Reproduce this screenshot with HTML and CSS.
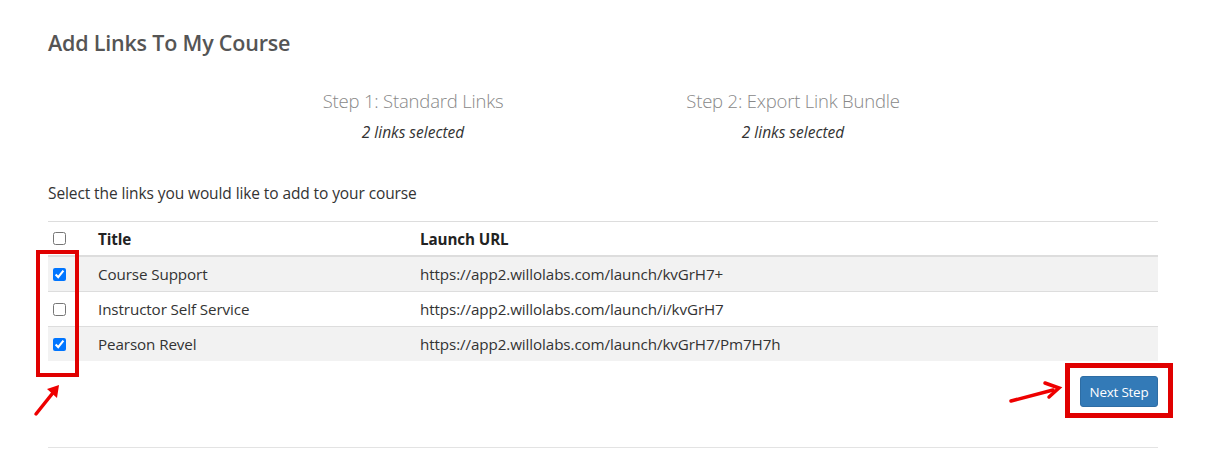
FILE: index.html
```html
<!DOCTYPE html>
<html>
<head>
<meta charset="utf-8">
<link rel="stylesheet" href="styles.css">
</head>
<body>
<div class="page">
  <h1 class="title">Add Links To My Course</h1>
  <div class="steps">
    <div class="step">
      <div class="step-name">Step 1: Standard Links</div>
      <div class="step-count">2 links selected</div>
    </div>
    <div class="step">
      <div class="step-name">Step 2: Export Link Bundle</div>
      <div class="step-count">2 links selected</div>
    </div>
  </div>
  <p class="intro">Select the links you would like to add to your course</p>
  <table class="links">
    <thead>
      <tr>
        <th class="c-check"><input type="checkbox"></th>
        <th class="c-title">Title</th>
        <th>Launch URL</th>
      </tr>
    </thead>
    <tbody>
      <tr class="odd">
        <td class="c-check"><input type="checkbox" checked></td>
        <td class="c-title">Course Support</td>
        <td>https://app2.willolabs.com/launch/kvGrH7+</td>
      </tr>
      <tr>
        <td class="c-check"><input type="checkbox"></td>
        <td class="c-title">Instructor Self Service</td>
        <td>https://app2.willolabs.com/launch/i/kvGrH7</td>
      </tr>
      <tr class="odd">
        <td class="c-check"><input type="checkbox" checked></td>
        <td class="c-title">Pearson Revel</td>
        <td>https://app2.willolabs.com/launch/kvGrH7/Pm7H7h</td>
      </tr>
    </tbody>
  </table>
  <div class="actions">
    <button class="btn">Next Step</button>
  </div>
  <hr class="rule">
</div>

<div class="mark mark-left"></div>
<div class="mark mark-right"></div>
<svg class="arrow arrow-left" width="40" height="40" viewBox="0 0 40 40">
  <path d="M4 37 L24 12" stroke="#e00" stroke-width="3.5" stroke-linecap="round" fill="none"/>
  <path d="M15 12 L27 8 L25 21 Z" fill="#e00"/>
</svg>
<svg class="arrow arrow-right" width="60" height="30" viewBox="0 0 60 30">
  <path d="M4 23 L46 12" stroke="#e00" stroke-width="3.5" stroke-linecap="round" fill="none"/>
  <path d="M38 5 L52 10 L42 19" stroke="#e00" stroke-width="3.5" stroke-linecap="round" stroke-linejoin="miter" fill="none"/>
</svg>
</body>
</html>
```

FILE: styles.css
```css
html, body {
  margin: 0;
  padding: 0;
  background: #fff;
}
body {
  font-family: "Open Sans", "Noto Sans", sans-serif;
  color: #333;
  position: relative;
  width: 1220px;
  height: 463px;
  overflow: hidden;
}
.page {
  padding: 0 62px 0 48px;
}
.title {
  margin: 0;
  padding-top: 28px;
  font-size: 21.5px;
  line-height: 30px;
  font-weight: 600;
  color: #555;
  letter-spacing: -0.2px;
}
.steps {
  display: flex;
  justify-content: center;
  margin-top: 30px;
}
.step {
  width: 380px;
  text-align: center;
}
.step-name {
  font-size: 18.5px;
  line-height: 26px;
  font-weight: 300;
  color: #888;
  letter-spacing: -0.2px;
}
.step-count {
  margin-top: 7px;
  font-size: 15.5px;
  line-height: 22px;
  font-style: italic;
  color: #333;
}
.intro {
  margin: 39px 0 0;
  font-size: 15.5px;
  line-height: 22px;
  color: #333;
  letter-spacing: -0.1px;
}
.links {
  width: 100%;
  margin-top: 17px;
  border-collapse: collapse;
  font-size: 15.2px;
  color: #333;
}
.links th,
.links td {
  padding: 0 8px 0 0;
  text-align: left;
  height: 34px;
  border-top: 1px solid #ddd;
  vertical-align: middle;
  letter-spacing: -0.1px;
}
.links th {
  height: 33px;
  font-weight: 700;
  color: #222;
  border-bottom: 2px solid #ddd;
  border-top: 1px solid #ddd;
}
.links tr.odd td {
  background: #f2f2f2;
}
.c-check {
  width: 38px;
  padding-left: 4px !important;
}
.c-check input {
  margin: 4px 0 0 1px;
  width: 13px;
  height: 13px;
}
.links td.c-title,
.links th.c-title {
  width: 314px;
}
.actions {
  display: flex;
  justify-content: flex-end;
  margin-top: 15px;
}
.btn {
  font-family: "Open Sans", "Noto Sans", sans-serif;
  background: #337ab7;
  color: #fff;
  border: 1px solid #2e6da4;
  border-radius: 3px;
  font-size: 13.4px;
  width: 78px;
  height: 31px;
  padding: 0;
  letter-spacing: -0.2px;
}
.rule {
  margin: 40px 0 0;
  border: 0;
  border-top: 1px solid #e3e3e3;
}
.mark {
  position: absolute;
  border-style: solid;
  border-color: #e00000;
  box-sizing: border-box;
}
.mark-left {
  left: 36px;
  top: 250px;
  width: 43px;
  height: 127px;
  border-width: 4px;
}
.mark-right {
  left: 1065px;
  top: 363px;
  width: 108px;
  height: 55px;
  border-width: 5px;
}
.arrow {
  position: absolute;
}
.arrow-left {
  left: 32px;
  top: 377px;
}
.arrow-right {
  left: 1007px;
  top: 378px;
}
```
